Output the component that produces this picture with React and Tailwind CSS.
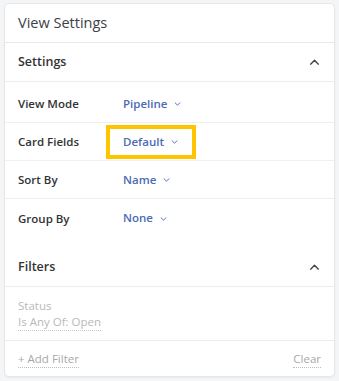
import React from "react";

const Chevron = ({ className }) => (
  <svg viewBox="0 0 8 5" className={className} fill="none" stroke="currentColor" strokeWidth="1.2" strokeLinecap="round" strokeLinejoin="round">
    <path d="M1 1 4 4 7 1" />
  </svg>
);

const ChevronUp = () => (
  <svg viewBox="0 0 12 7" className="w-[11px] h-[6px] text-[#444]" fill="none" stroke="currentColor" strokeWidth="1.6" strokeLinecap="round" strokeLinejoin="round">
    <path d="M1.5 6 6 1.5 10.5 6" />
  </svg>
);

const rows = [
  { label: "View Mode", value: "Pipeline" },
  { label: "Card Fields", value: "Default", highlight: true },
  { label: "Sort By", value: "Name" },
  { label: "Group By", value: "None", last: true },
];

const SectionHeader = ({ title }) => (
  <div className="flex items-center justify-between h-[39px] pl-[13px] pr-[14px] border-b border-[#ececec]">
    <span className="text-[12.5px] font-semibold text-[#333] mt-[1px]">{title}</span>
    <ChevronUp />
  </div>
);

export default function App() {
  return (
    <div className="w-[339px] h-[381px] bg-[#f4f5f6] pt-[3px] px-[4px] pb-[4px]" style={{ fontFamily: '"Open Sans", "Noto Sans", sans-serif' }}>
      <div className="h-full bg-white rounded-[5px] border border-[#e6e7e8] shadow-[0_1px_2px_rgba(0,0,0,0.05)] flex flex-col overflow-hidden">
        <div className="h-[39px] flex items-center pl-[13px] border-b border-[#e8e8e8]">
          <span className="text-[14.5px] text-[#3c4248]">View Settings</span>
        </div>

        <SectionHeader title="Settings" />
        <div className="pt-[3px] pb-[11px]">
          {rows.map((r) => (
            <div key={r.label} className={`flex items-center h-[38px] pl-[13px] ${r.last ? "" : "border-b border-[#efefef]"}`}>
              <span className="w-[105px] text-[11.5px] font-semibold text-[#333] mt-[1px]">{r.label}</span>
              <div className={`flex items-center gap-[7px] h-[34px] ${r.highlight ? "border-[4px] border-[#fec400] -ml-[17px] pl-[13px] pr-[14px]" : ""}`}>
                <span className="text-[11.5px] font-semibold text-[#4b6cb3]">{r.value}</span>
                <Chevron className="w-[7px] h-[4px] text-[#4b6cb3] mt-[1px]" />
              </div>
            </div>
          ))}
        </div>

        <SectionHeader title="Filters" />
        <div className="flex flex-col pl-[13px] pt-[11px] h-[54px] border-b border-[#ececec]">
          <span className="text-[11.5px] leading-[16px] text-[#b9b9b9]">Status</span>
          <span className="text-[11.5px] leading-[16px] text-[#b9b9b9] self-start border-b border-dotted border-[#c8c8c8]">Is Any Of: Open</span>
        </div>
        <div className="flex-1 flex items-center justify-between pl-[13px] pr-[13px] pt-[2px]">
          <span className="text-[11.5px] leading-[16px] text-[#a8a8a8] border-b border-dotted border-[#bdbdbd]">+ Add Filter</span>
          <span className="text-[11.5px] leading-[16px] text-[#a8a8a8] border-b border-dotted border-[#bdbdbd]">Clear</span>
        </div>
      </div>
    </div>
  );
}
